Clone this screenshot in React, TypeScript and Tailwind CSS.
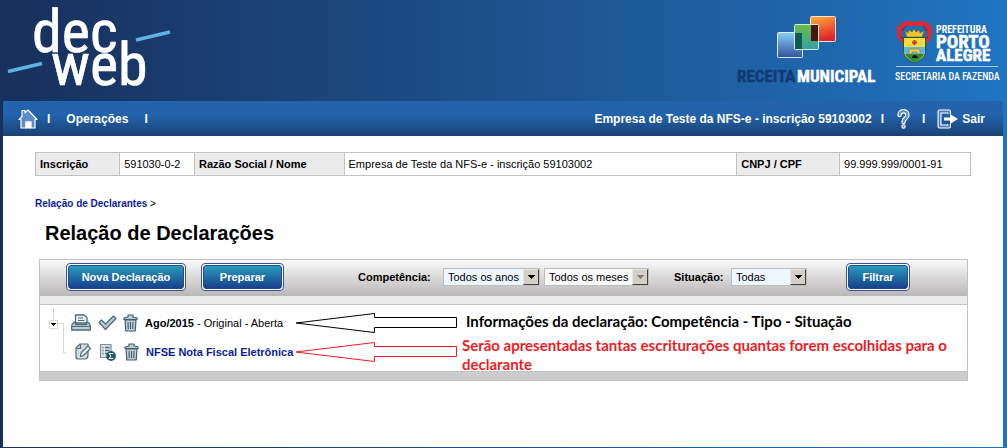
import { useState } from "react";
import type { ReactNode } from "react";

const NARROW = "'Roboto Condensed', 'Liberation Sans Narrow', 'DejaVu Sans Condensed', sans-serif";

function DecWebLogo() {
  return (
    <svg width="180" height="101" viewBox="0 0 180 101" role="img" aria-label="dec web">
      <g fill="#fff" fontFamily={NARROW} fontSize="60" stroke="#fff" strokeWidth=".6" strokeLinejoin="round">
        <text x="32" y="52">dec</text>
        <text x="51" y="85">web</text>
      </g>
      <path d="M8 71.5 42 63.5M136 40 170 32" stroke="#5fb2e0" strokeWidth="3.6" />
    </svg>
  );
}

function ReceitaLogo() {
  return (
    <svg width="142" height="101" viewBox="0 0 142 101" role="img" aria-label="Receita Municipal">
      <defs>
        <linearGradient id="blueSq" x1="0" y1="0" x2="0" y2="1">
          <stop offset="0" stopColor="#86d3f5" />
          <stop offset="1" stopColor="#34509b" />
        </linearGradient>
        <linearGradient id="greenSq" x1="0" y1="0" x2="0" y2="1">
          <stop offset="0" stopColor="#6dbb45" />
          <stop offset="1" stopColor="#35a0a8" />
        </linearGradient>
        <linearGradient id="redSq" x1="0" y1="0" x2="0.3" y2="1">
          <stop offset="0" stopColor="#fbb03f" />
          <stop offset="1" stopColor="#e3242b" />
        </linearGradient>
      </defs>
      <rect x="42.5" y="32.5" width="25" height="25" rx="1" fill="url(#blueSq)" stroke="#dcebf7" />
      <rect x="75.5" y="16.5" width="25" height="25" rx="1" fill="url(#redSq)" stroke="#fbe5d5" />
      <rect x="59.5" y="24.5" width="24" height="25" rx="1" fill="url(#greenSq)" stroke="#d5ecd9" />
      <rect x="60" y="33" width="7" height="16" fill="#0f5c50" />
      <rect x="76" y="25" width="7" height="16" fill="#4a1412" />
      <g fontFamily={NARROW} fontSize="17" fontWeight="bold">
        <text x="2" y="82" fill="#123a73" stroke="#123a73" strokeWidth=".4">RECEITA</text>
        <text x="62" y="82" fill="#fff" stroke="#fff" strokeWidth=".4">MUNICIPAL</text>
      </g>
    </svg>
  );
}

function PrefeituraLogo() {
  return (
    <svg width="106" height="101" viewBox="0 0 106 101" role="img" aria-label="Prefeitura Porto Alegre">
      <path
        d="M3 37C0 31 2 25 7 23c4-3 8-2 12-1 4-1 9-2 13 1 5 2 7 8 4 14-1 4-3 6-6 6l2-8c1-5-1-8-5-9H12c-5 1-6 4-5 9l2 8c-3 0-5-2-6-6z"
        fill="#d52b36"
      />
      <path d="M7 31l4-5M32 31l-4-5M6 37l3 2M33 37l-3 2" stroke="#7c1a35" />
      <path d="M10 31l2 6h15l2-6-4 2-1-3-3 2-2-3-2 3-3-2-1 3z" fill="#f0c52d" stroke="#8d6618" strokeWidth=".6" />
      <path d="M8.500 37.500h22v14c0 5-5 9-11 11-6-2-11-6-11-11z" fill="#f7dd3a" stroke="#23592f" />
      <path d="M9 47h21v4c0 1 0 2-1 3H10c-1-1-1-2-1-3z" fill="#5fb6e6" />
      <path d="M10 54h19c-2 4-5 6-9.500 8C15 60 12 58 10 54z" fill="#2c8a3b" />
      <path d="M14 54v-5h11v5h-3v-2h-5v2z" fill="#e3d04a" stroke="#8d6618" strokeWidth=".5" />
      <path d="M17 58c0-4 5-4 6 0z" fill="#161616" />
      <path d="M19.500 40v5M17 42.500h5" stroke="#d52b36" strokeWidth="2" />
      <g fill="#fff" fontFamily={NARROW} fontWeight="bold">
        <text x="41" y="33" fontSize="10">PREFEITURA</text>
        <text x="41" y="48" fontSize="19" stroke="#fff" strokeWidth=".5">PORTO</text>
        <text x="41" y="61" fontSize="17" stroke="#fff" strokeWidth=".5">ALEGRE</text>
        <text x="0" y="80" fontSize="10" fontWeight="500">SECRETARIA DA FAZENDA</text>
      </g>
      <path d="M1 66.500h102" stroke="#a9c9e6" />
    </svg>
  );
}

function HomeIcon() {
  return (
    <svg width="20" height="20" viewBox="0 0 20 20" fill="#5f8cc4" stroke="#fff" strokeWidth="1.200" strokeLinejoin="round">
      <path d="M1 10.500 4 7.500V1.500h3v2.500L10 1l9 9.500h-2V19h-4v-6H8v6H3v-8.500z" />
      <path d="M8 19v-6h4.500v6z" fill="#fff" />
    </svg>
  );
}

function HelpIcon() {
  return (
    <svg width="13" height="20" viewBox="0 0 13 20" fill="none" strokeLinecap="round" strokeLinejoin="round">
      <path d="M2.500 6c0-5 8-5 8 0 0 3-4 3.500-4 7M6.500 17.400v.1" stroke="#fff" strokeWidth="4.400" />
      <path d="M2.500 6c0-5 8-5 8 0 0 3-4 3.500-4 7M6.500 17.400v.1" stroke="#5f8cc4" strokeWidth="2.200" />
    </svg>
  );
}

function ExitIcon() {
  return (
    <svg width="21" height="20" viewBox="0 0 21 20" fill="none" strokeLinejoin="round">
      <path d="M12 5V2.500H2.500v15H12V15" stroke="#fff" strokeWidth="4" />
      <path d="M12 5V2.500H2.500v15H12V15" stroke="#4f7fbd" strokeWidth="1.800" />
      <path d="M7 8.500h6V5l8 5-8 5v-3.500H7z" fill="#fff" />
    </svg>
  );
}

function PrinterIcon() {
  return (
    <svg width="20" height="17" viewBox="0 0 20 17" fill="#c3ccd2" stroke="#4b6c7d" strokeWidth="1.300" strokeLinejoin="round">
      <path d="M4.500 9V1h8.500l3 2.500V9z" fill="#eef1f3" />
      <path d="M2.500 8.500h2v2h11v-2h2l1.800 3V16H.7v-4.500z" />
      <path d="M7 4h5M7 6.500h6.500M1 12.500h18" strokeWidth="1.100" />
    </svg>
  );
}

function CheckIcon() {
  return (
    <svg width="19" height="16" viewBox="0 0 19 16" fill="#b9c5ce" stroke="#4b6c7d" strokeWidth="1.200" strokeLinejoin="round">
      <path d="M1 7.500 3.500 5 7.500 9 15.500 1 18 3.500 7.500 14.500z" />
    </svg>
  );
}

function TrashIcon() {
  return (
    <svg width="15" height="18" viewBox="0 0 15 18" fill="#c3ccd2" stroke="#3f6273" strokeWidth="1.200" strokeLinejoin="round">
      <path d="M2 6h11l-.8 11H2.800z" />
      <path d="M1 5.500V4l4-1V1h5v2l4 1v1.500z" />
      <path d="M5 8l.3 7M7.500 8v7M10 8l-.3 7" strokeWidth="1.100" />
    </svg>
  );
}

function EditIcon() {
  return (
    <svg width="16" height="17" viewBox="0 0 16 17" fill="#d4dade" stroke="#4b6c7d" strokeWidth="1.200" strokeLinejoin="round">
      <path d="M1 5 5 1h8v11c0 3-1 4-3 4H3c-2 0-2-1-2-3z" />
      <path d="M1.500 5.500H5.500V1.500" fill="none" />
      <path d="M5.500 13.500 6 10l7-7 2.500 2.500-7 7z" fill="#fff" />
    </svg>
  );
}

function SheetSumIcon() {
  return (
    <svg width="17" height="18" viewBox="0 0 17 18" fill="none">
      <path d="M1.500 1.500h10.500v13H1.500z" fill="#dde1e4" stroke="#75909e" strokeWidth="1.200" strokeLinejoin="round" />
      <path d="M3.500 4.500h1M6 4.500h4.500M3.500 7.500h1M6 7.500h4.500M3.500 10.500h1M6 10.500h3" stroke="#4b6c7d" strokeWidth="1.300" />
      <circle cx="12" cy="13" r="4.900" fill="#1f566b" />
      <path d="M14 11.200v-.7h-4l2 2.500-2 2.500h4v-.7" stroke="#fff" />
    </svg>
  );
}

function TreeLines() {
  return (
    <svg width="18" height="48" viewBox="0 0 18 48" fill="none" shapeRendering="crispEdges">
      <path d="M4.500 0v12M9 15.500h5.500v29H17" stroke="#d5d5d5" />
      <path d="M.5 12.500h8v8h-8z" fill="#fff" stroke="#e0dcd4" />
      <path d="M2 15h5L4.500 18z" fill="#000" />
    </svg>
  );
}

function CalloutArrow({ color }: { color: string }) {
  return (
    <svg width="162" height="20" viewBox="0 0 162 20" fill="none" stroke={color} className="shrink-0">
      <path d="M1 10 79.500 .5v4h82v10h-82v5z" />
    </svg>
  );
}

function ActionButton({ children, className }: { children: ReactNode; className: string }) {
  return (
    <button
      type="button"
      className={`h-[28px] shrink-0 rounded border border-[#3c4f9e] bg-white p-px leading-[14px] font-bold text-white ${className}`}
    >
      <span className="flex h-full items-center justify-center rounded-[3px] border border-[#1c4f8c] bg-linear-to-b from-[#2b9bbd] to-[#19418a]">
        {children}
      </span>
    </button>
  );
}

type SelectBoxProps = {
  id: string;
  label: string;
  options: string[];
  className: string;
  disabled?: boolean;
};

function SelectBox({ id, label, options, className, disabled }: SelectBoxProps) {
  const [value, setValue] = useState(options[0]);

  return (
    <span className={`relative block h-[18px] shrink-0 ${className}`}>
      <select
        id={id}
        aria-label={label}
        value={value}
        disabled={disabled}
        onChange={(e) => setValue(e.target.value)}
        className="block h-full w-full appearance-none border border-[#bdbdbd] bg-[#eef7ff] pl-[4px] text-[11px] leading-[14px] text-black opacity-100 disabled:bg-[#f8f8f8]"
      >
        {options.map((o) => (
          <option key={o}>{o}</option>
        ))}
      </select>
      <span className="pointer-events-none absolute top-px right-px flex h-[16px] w-[16px] items-center justify-center border border-t-[#e8e5df] border-r-[#404040] border-b-[#404040] border-l-[#e8e5df] bg-[#d4d0c8]">
        <svg width="7" height="4" viewBox="0 0 7 4" shapeRendering="crispEdges">
          <path d="M0 0h7L3.500 4z" fill={disabled ? "#808080" : "#000"} />
        </svg>
      </span>
    </span>
  );
}

export default function App() {
  return (
    <div className="flex min-h-screen flex-col bg-linear-to-r from-[#17305c] to-[#1f74c0] pr-[4px] pb-px pl-[3px] font-['Liberation_Sans',Arial,sans-serif] text-[11px] text-black">
      <header className="flex h-[101px] shrink-0 items-start">
        <div className="-ml-[3px] flex-1">
          <DecWebLogo />
        </div>
        <div className="flex gap-[18px] pr-[2px]">
          <ReceitaLogo />
          <PrefeituraLogo />
        </div>
      </header>

      <nav className="flex h-[35px] shrink-0 items-center bg-linear-to-b from-[#2263ac] from-40% to-[#1a4273] pr-[18px] pl-[15px] text-[12px] leading-[14px] font-bold whitespace-nowrap text-white">
        <a href="#" aria-label="Início">
          <HomeIcon />
        </a>
        <span className="ml-[9px]">I</span>
        <a href="#" className="ml-[16px]">Operações</a>
        <span className="ml-[16px]">I</span>
        <span className="ml-auto">Empresa de Teste da NFS-e - inscrição 59103002</span>
        <span className="ml-[9px]">I</span>
        <a href="#" aria-label="Ajuda" className="ml-[13px]">
          <HelpIcon />
        </a>
        <span className="ml-[12px]">I</span>
        <a href="#" className="ml-[12px] flex items-center gap-[4px]">
          <ExitIcon />
          Sair
        </a>
      </nav>

      <main className="flex-1 bg-white px-8 pt-4">
        <table className="w-full table-fixed border-collapse text-left leading-[14px] [&_td]:border [&_td]:border-[#c0c0c8] [&_td]:px-1 [&_td]:py-1 [&_th]:border [&_th]:border-[#c0c0c8] [&_th]:bg-[#ebebeb] [&_th]:px-1 [&_th]:py-1">
          <tbody>
            <tr>
              <th className="w-[9%]">Inscrição</th>
              <td className="w-[8%]">591030-0-2</td>
              <th className="w-[16%]">Razão Social / Nome</th>
              <td className="w-[42%]">Empresa de Teste da NFS-e - inscrição 59103002</td>
              <th className="w-[11%]">CNPJ / CPF</th>
              <td className="w-[14%]">99.999.999/0001-91</td>
            </tr>
          </tbody>
        </table>

        <p className="mt-[21px] text-[10px] leading-[14px]">
          <a href="#" className="font-bold text-[#0a1e9c]">Relação de Declarantes</a> &gt;
        </p>
        <h1 className="mt-[10px] ml-[10px] text-[20px] leading-[24px] font-bold">Relação de Declarações</h1>

        <section className="mt-[14px] mr-[3px] ml-1 border border-[#c0c0c8]">
          <form className="flex h-[36px] items-center bg-linear-to-b from-[#fafafa] to-[#bab7b7] pb-[2px] pl-[26px]">
            <ActionButton className="w-[120px]">Nova Declaração</ActionButton>
            <ActionButton className="ml-[15px] w-[83px]">Preparar</ActionButton>
            <label htmlFor="ano" className="ml-[74px] w-[85px] shrink-0 font-bold">Competência:</label>
            <SelectBox id="ano" label="Competência, ano" options={["Todos os anos", "2015"]} className="w-[97px]" />
            <SelectBox id="mes" label="Competência, mês" options={["Todos os meses"]} className="ml-1 w-[105px]" disabled />
            <label htmlFor="situacao" className="ml-[25px] w-[57px] shrink-0 font-bold">Situação:</label>
            <SelectBox id="situacao" label="Situação" options={["Todas", "Aberta"]} className="w-[76px]" />
            <ActionButton className="ml-[39px] w-[64px]">Filtrar</ActionButton>
          </form>
          <div className="h-[8px] bg-[#ebebeb]" />

          <div className="flex h-[67px] border-t border-[#c0c0c8] whitespace-nowrap">
            <div className="pt-[3px] pl-[9px]">
              <TreeLines />
            </div>
            <ul className="w-[395px] shrink-0 pt-[3px] pr-[5px] leading-[14px]">
              <li className="flex h-[29px] items-center pl-1">
                <span className="flex w-[74px] shrink-0 items-center justify-between pr-[7px]">
                  <button type="button" aria-label="Imprimir"><PrinterIcon /></button>
                  <button type="button" aria-label="Confirmar"><CheckIcon /></button>
                  <button type="button" aria-label="Excluir"><TrashIcon /></button>
                </span>
                <span className="flex-1"><b>Ago/2015</b> - Original - Aberta</span>
                <CalloutArrow color="#000" />
              </li>
              <li className="flex h-[29px] items-center pl-[8px]">
                <span className="flex w-[71px] shrink-0 items-center justify-between pr-[7px]">
                  <button type="button" aria-label="Editar"><EditIcon /></button>
                  <button type="button" aria-label="Totais"><SheetSumIcon /></button>
                  <button type="button" aria-label="Excluir"><TrashIcon /></button>
                </span>
                <a href="#" className="flex-1 font-bold text-[#0a1e9c]">NFSE Nota Fiscal Eletrônica</a>
                <CalloutArrow color="#ed1c24" />
              </li>
            </ul>
            <div className="pt-[7px] font-[Lato,sans-serif] text-[15px] leading-[19px] font-bold">
              <p className="ml-1">Informações da declaração: Competência - Tipo - Situação</p>
              <p className="mt-[5px] text-[#ed1c24]">
                Serão apresentadas tantas escriturações quantas forem escolhidas para o
                <br />
                declarante
              </p>
            </div>
          </div>
          <div className="h-[9px] border-t border-[#c0c0c8] bg-[#ccc]" />
        </section>
      </main>
    </div>
  );
}
